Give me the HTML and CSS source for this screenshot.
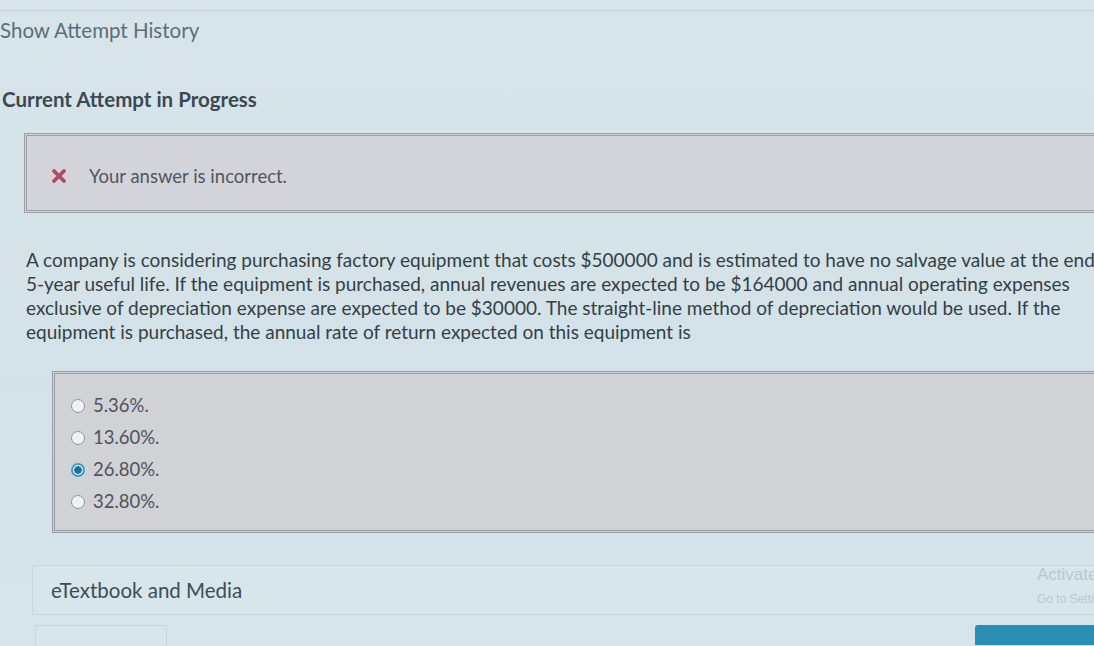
FILE: index.html
```html
<!DOCTYPE html>
<html>
<head>
<meta charset="utf-8">
<link rel="stylesheet" href="styles.css">
</head>
<body>
<div class="page">
  <div class="topline"></div>
  <div class="history">Show Attempt History</div>
  <div class="current">Current Attempt in Progress</div>
  <div class="feedback">
    <svg class="xicon" width="16" height="16" viewBox="0 0 16 16"><path d="M3 3 L13 13 M13 3 L3 13" stroke="#b04a5e" stroke-width="3.8" stroke-linecap="round"/></svg>
    <span>Your answer is incorrect.</span>
  </div>
  <p class="question">A company is considering purchasing factory equipment that costs $500000 and is estimated to have no salvage value at the end of a<br>5-year useful life. If the equipment is purchased, annual revenues are expected to be $164000 and annual operating expenses<br>exclusive of depreciation expense are expected to be $30000. The straight-line method of depreciation would be used. If the<br>equipment is purchased, the annual rate of return expected on this equipment is</p>
  <div class="options">
    <label class="opt"><span class="radio"></span>5.36%.</label>
    <label class="opt"><span class="radio"></span>13.60%.</label>
    <label class="opt"><span class="radio checked"></span>26.80%.</label>
    <label class="opt"><span class="radio"></span>32.80%.</label>
  </div>
  <div class="media">eTextbook and Media
    <div class="watermark"><div class="wm1">Activate Windows</div><div class="wm2">Go to Settings to activate Windows.</div></div>
  </div>
  <div class="bottomrow">
    <div class="smallbox"></div>
    <div class="bluebtn"></div>
  </div>
</div>
</body>
</html>
```
FILE: styles.css
```css
html, body {
  margin: 0;
  padding: 0;
  overflow: hidden;
  background: #d4e3e9;
}
.page {
  width: 1130px;
  height: 646px;
  font-family: Lato, "Open Sans", sans-serif;
  color: #3e4a54;
  background: linear-gradient(180deg, #d7e5ea 0%, #d3e2e8 60%, #d6e5ea 100%);
  position: relative;
}
.topline {
  height: 10px;
  border-bottom: 1px solid #c3d0d6;
}
.history {
  font-size: 20.5px;
  color: #5d6d78;
  padding-top: 7px;
  line-height: 24px;
}
.current {
  font-size: 20.5px;
  font-weight: 700;
  color: #3c4852;
  margin-top: 45px;
  margin-left: 2px;
  line-height: 24px;
}
.feedback {
  margin: 22px 0 0 24px;
  border: 3px double #9c9ca4;
  background: #d3d4da;
  display: flex;
  align-items: center;
  gap: 22px;
  padding-left: 24px;
  padding-top: 6px;
  box-sizing: border-box;
  height: 80px;
  font-size: 18.5px;
  color: #4f5660;
}
.xicon { flex: none; }
.question {
  margin: 35px 0 0 26px;
  font-size: 19px;
  line-height: 24px;
  color: #343e46;
  white-space: nowrap;
}
.options {
  margin: 27px 0 0 52px;
  height: 162px;
  border: 3px double #9a9ba2;
  background: #d0d2d6;
  padding: 20px 0 0 16px;
  box-sizing: border-box;
  display: flex;
  flex-direction: column;
  gap: 9px;
}
.opt {
  display: flex;
  align-items: center;
  gap: 8px;
  font-size: 18.5px;
  line-height: 23px;
  color: #4c545d;
}
.radio {
  width: 14px;
  height: 14px;
  border-radius: 50%;
  border: 1px solid #8f979e;
  background: #eef0f2;
  box-sizing: border-box;
  flex: none;
}
.radio.checked {
  border: 2px solid #3f9ec8;
  background: radial-gradient(circle, #1f6f94 0 3.5px, #e9f2f6 4px);
}
.media {
  margin: 32px 0 0 32px;
  height: 48px;
  border: 1px solid #c9d8de;
  background: #d7e6eb;
  display: flex;
  align-items: center;
  padding-left: 18px;
  font-size: 20.5px;
  color: #3e4c56;
  position: relative;
}
.watermark {
  position: absolute;
  left: 1004px;
  top: -2px;
  color: #b9c8ce;
  white-space: nowrap;
}
.wm1 { font-size: 17px; line-height: 22px; font-family: "Liberation Sans", sans-serif; }
.wm2 { font-size: 12px; line-height: 26px; font-family: "Liberation Sans", sans-serif; }
.bottomrow {
  margin-top: 10px;
  display: flex;
  justify-content: space-between;
  padding-left: 35px;
}
.smallbox {
  width: 130px;
  height: 20px;
  border: 1px solid #c8d6dc;
  border-bottom: none;
  background: #d8e6eb;
}
.bluebtn {
  width: 155px;
  height: 20px;
  background: #2a8db3;
  border-radius: 3px 0 0 0;
}
```
